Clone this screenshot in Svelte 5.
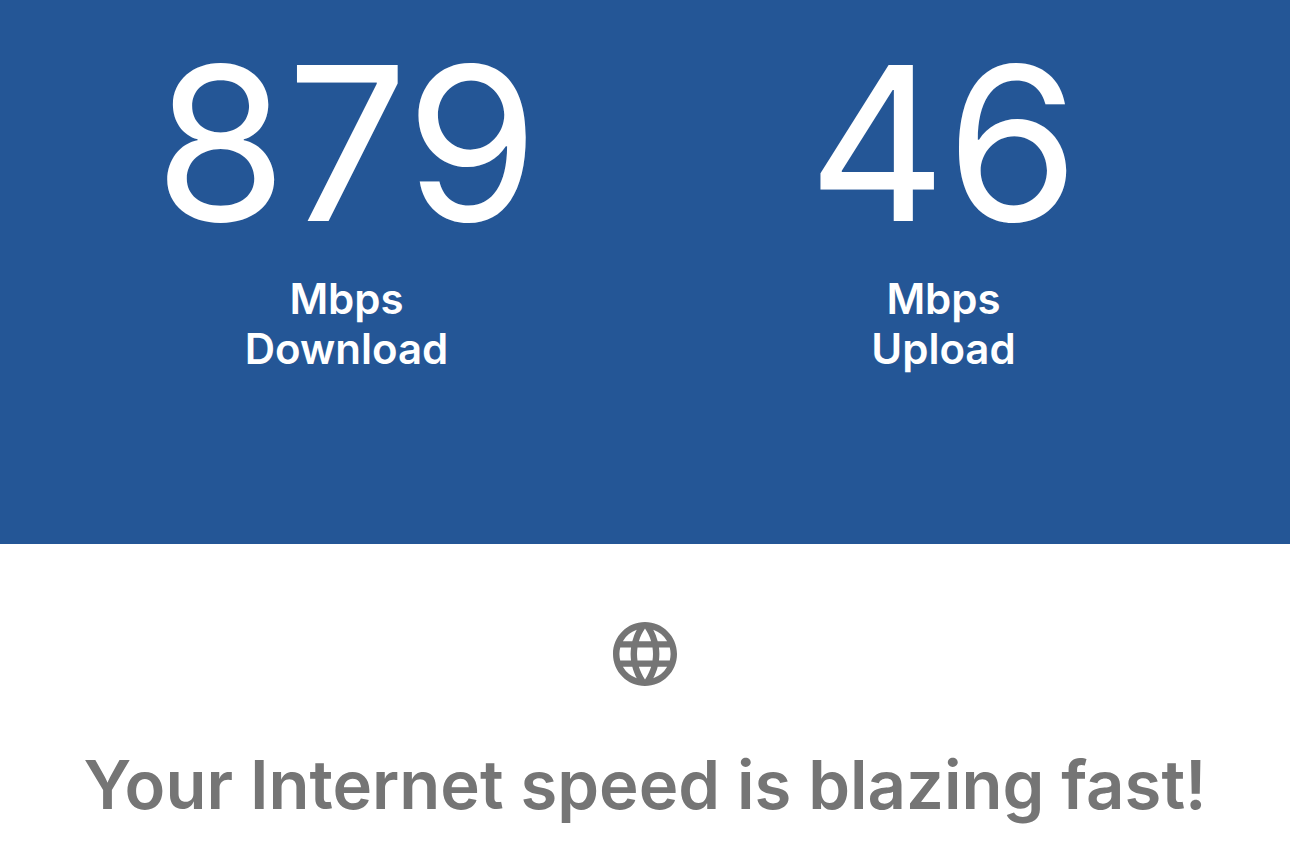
<script>
  const results = [
    { value: 879, label: 'Download' },
    { value: 46, label: 'Upload' }
  ];
</script>

<main>
  <section class="results" aria-label="Speed test results">
    {#each results as result}
      <div class="result">
        <div class="value">{result.value}</div>
        <div class="label">Mbps<br />{result.label}</div>
      </div>
    {/each}
  </section>
  <section class="summary">
    <svg class="globe" viewBox="2 2 20 20" aria-hidden="true">
      <path d="M11.99 2C6.47 2 2 6.48 2 12s4.47 10 9.99 10C17.52 22 22 17.52 22 12S17.52 2 11.99 2zm6.93 6h-2.95a15.65 15.65 0 0 0-1.38-3.56A8.03 8.03 0 0 1 18.92 8zM12 4.04c.83 1.2 1.48 2.53 1.91 3.96h-3.82c.43-1.43 1.08-2.76 1.91-3.96zM4.26 14C4.1 13.36 4 12.69 4 12s.1-1.36.26-2h3.38c-.08.66-.14 1.32-.14 2s.06 1.34.14 2H4.26zm.82 2h2.95c.32 1.25.78 2.45 1.38 3.56A7.99 7.99 0 0 1 5.08 16zm2.95-8H5.08a7.99 7.99 0 0 1 4.33-3.56A15.65 15.65 0 0 0 8.03 8zM12 19.96c-.83-1.2-1.48-2.53-1.91-3.96h3.82c-.43 1.43-1.08 2.76-1.91 3.96zM14.34 14H9.66c-.09-.66-.16-1.32-.16-2s.07-1.35.16-2h4.68c.09.65.16 1.32.16 2s-.07 1.34-.16 2zm.25 5.56c.6-1.11 1.06-2.31 1.38-3.56h2.95a8.03 8.03 0 0 1-4.33 3.56zM16.36 14c.08-.66.14-1.32.14-2s-.06-1.34-.14-2h3.38c.16.64.26 1.31.26 2s-.1 1.36-.26 2h-3.38z" />
    </svg>
    <h1>Your Internet speed is blazing fast!</h1>
  </section>
</main>

<style>
  :global(body) {
    margin: 0;
    background: #fff;
  }

  main {
    font-family: Inter, 'Liberation Sans', sans-serif;
  }

  .results {
    display: grid;
    grid-template-columns: 1fr 1fr;
    padding: 36px 48px 170px;
    background: #245696;
    color: #fff;
    text-align: center;
  }

  .value {
    font-size: 214px;
    font-weight: 400;
    line-height: 216px;
  }

  .label {
    margin-top: 22px;
    font-size: 42px;
    font-weight: 600;
    line-height: 50px;
  }

  .summary {
    display: flex;
    flex-direction: column;
    align-items: center;
    padding: 78px 24px 32px;
    color: #757575;
    text-align: center;
  }

  .globe {
    width: 64px;
    height: 64px;
    fill: currentColor;
  }

  h1 {
    margin: 57px 0 0;
    font-size: 67px;
    font-weight: 600;
    line-height: 84px;
  }
</style>
